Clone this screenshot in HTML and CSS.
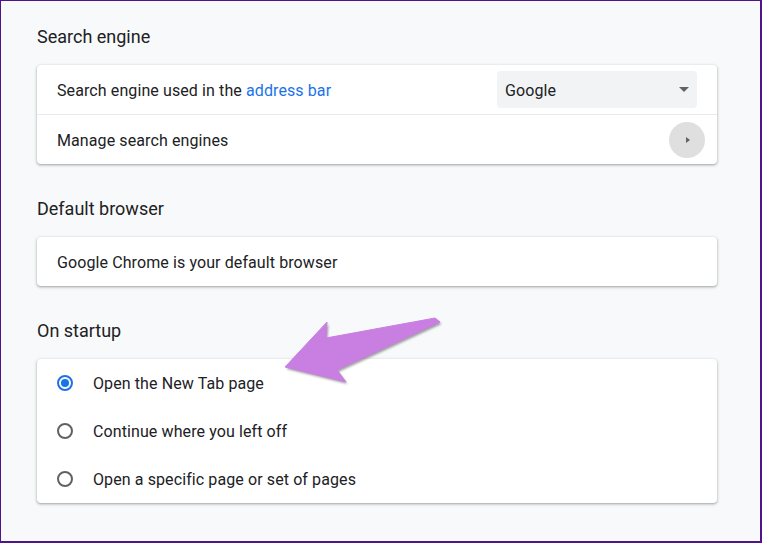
FILE: index.html
```html
<!DOCTYPE html>
<html>
<head>
<meta charset="utf-8">
<link rel="stylesheet" href="styles.css">
</head>
<body>
<div class="frame">
  <section class="section first">
    <h2 class="heading">Search engine</h2>
    <div class="card">
      <div class="row">
        <span class="label">Search engine used in the <a class="link">address bar</a></span>
        <div class="select">
          <span class="label">Google</span>
          <svg class="caret" width="10" height="5" viewBox="0 0 10 5"><path d="M0 0H10L5 5Z" fill="#5f6368"/></svg>
        </div>
      </div>
      <div class="row divided">
        <span class="label">Manage search engines</span>
        <div class="subpage">
          <svg width="4" height="6" viewBox="0 0 4 6"><path d="M0 0L4 3L0 6Z" fill="#5f6368"/></svg>
        </div>
      </div>
    </div>
  </section>

  <section class="section">
    <h2 class="heading">Default browser</h2>
    <div class="card">
      <div class="row">
        <span class="label">Google Chrome is your default browser</span>
      </div>
    </div>
  </section>

  <section class="section">
    <h2 class="heading">On startup</h2>
    <div class="card">
      <div class="radio-row">
        <span class="radio checked"></span>
        <span class="label">Open the New Tab page</span>
      </div>
      <div class="radio-row">
        <span class="radio"></span>
        <span class="label">Continue where you left off</span>
      </div>
      <div class="radio-row">
        <span class="radio"></span>
        <span class="label">Open a specific page or set of pages</span>
      </div>
    </div>
  </section>

  <svg class="arrow" width="762" height="543" viewBox="0 0 762 543">
    <defs>
      <filter id="blur" x="-10%" y="-10%" width="120%" height="130%">
        <feGaussianBlur stdDeviation="1.2"/>
      </filter>
    </defs>
    <polygon points="285,367 327,322 326,338 435,318 440,322 337,370 346,382" transform="translate(1.5,2)" fill="#555" opacity="0.55" filter="url(#blur)"/>
    <polygon points="285,367 327,322 326,338 435,318 440,322 337,370 346,382" fill="#c97fe1" stroke="#c97fe1" stroke-width="1" stroke-linejoin="round"/>
  </svg>
</div>
</body>
</html>
```

FILE: styles.css
```css
* { box-sizing: border-box; }
html, body { margin: 0; padding: 0; }
body {
  font-family: Roboto, "Liberation Sans", sans-serif;
  color: #202124;
}
.frame {
  position: relative;
  width: 762px;
  height: 543px;
  background: #f8f9fa;
  border-top: 1px solid #4e1489;
  border-left: 1px solid #4e1489;
  border-right: 2px solid #4e1489;
  border-bottom: 2px solid #4e1489;
  padding: 23px 0 0 36px;
  overflow: hidden;
}
.section { margin-top: 32px; }
.section.first { margin-top: 0; }
.heading {
  margin: 0 0 15px 0;
  font-size: 18px;
  font-weight: 400;
  line-height: 26px;
  color: #202124;
}
.card {
  width: 680px;
  background: #fff;
  border-radius: 4px;
  box-shadow: 0 1px 2px 0 rgba(60,64,67,.3), 0 1px 3px 1px rgba(60,64,67,.15);
}
.row {
  height: 49px;
  display: flex;
  align-items: center;
  justify-content: space-between;
  padding: 0 20px;
}
.row.divided {
  height: 50px;
  border-top: 1px solid #e8eaed;
  padding-right: 12px;
}
.label {
  font-size: 16px;
  line-height: 20px;
  letter-spacing: 0.1px;
  padding-top: 2px;
}
.link { color: #1a73e8; text-decoration: none; }
.select {
  width: 200px;
  height: 37px;
  background: #f1f3f4;
  border-radius: 4px;
  display: flex;
  align-items: center;
  justify-content: space-between;
  padding: 0 8px;
}
.caret { display: block; }
.subpage {
  width: 36px;
  height: 36px;
  border-radius: 50%;
  background: #dfdfdf;
  display: flex;
  align-items: center;
  justify-content: center;
}
.subpage svg { display: block; margin-left: 1px; }
.radio-row {
  height: 48px;
  display: flex;
  align-items: center;
  padding: 0 20px;
  gap: 20px;
}
.radio {
  width: 16px;
  height: 16px;
  border-radius: 50%;
  border: 2px solid #5f6368;
  display: flex;
  align-items: center;
  justify-content: center;
  flex: none;
}
.radio.checked { border-color: #1a73e8; }
.radio.checked::after {
  content: "";
  width: 8px;
  height: 8px;
  border-radius: 50%;
  background: #1a73e8;
}
.arrow {
  position: absolute;
  left: -1px;
  top: -1px;
  pointer-events: none;
}
```
